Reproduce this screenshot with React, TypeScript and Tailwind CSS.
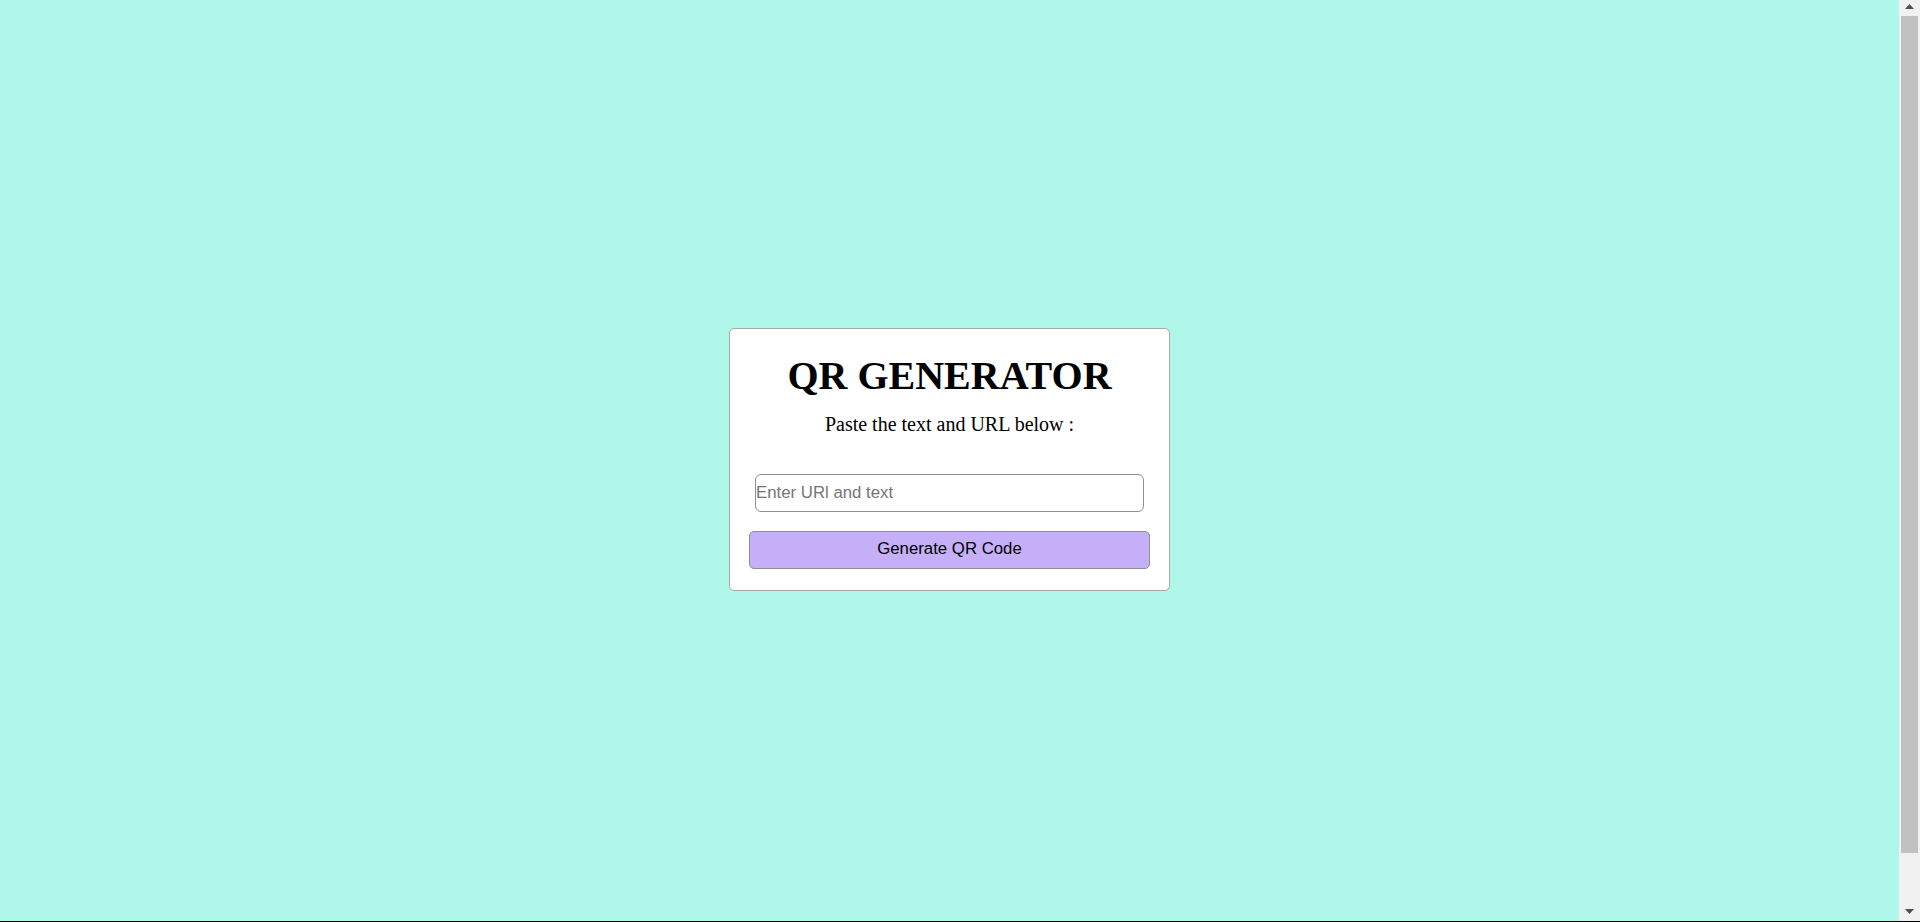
import React, { useState } from "react";

// imitation of the browser's classic scrollbar shown in the screenshot
function ScrollTrack() {
  return (
    <div className="flex w-[21px] flex-col bg-[#f1f1f1]">
      <div className="flex h-[16px] items-start justify-center pt-[4px]">
        <svg width="9" height="5" viewBox="0 0 9 5">
          <polygon points="4.5,0 9,5 0,5" fill="#505050" />
        </svg>
      </div>
      <div className="ml-[2px] h-[837px] w-[17px] bg-[#c1c1c1]" />
      <div className="flex-1" />
      <div className="flex h-[16px] items-start justify-center pt-[4px]">
        <svg width="9" height="5" viewBox="0 0 9 5">
          <polygon points="0,0 9,0 4.5,5" fill="#505050" />
        </svg>
      </div>
    </div>
  );
}

export default function App() {
  const [text, setText] = useState("");

  return (
    <div className="flex h-screen flex-col overflow-hidden bg-[#aff8e9] font-['Liberation_Serif',serif]">
      <div className="flex h-[921px]">
        <main className="flex flex-1 items-center justify-center pb-[3px]">
          <div className="flex w-[441px] flex-col items-center rounded-[5px] border border-[#a9a9a9] bg-white pt-[24px] pb-[21px]">
            <h1 className="text-[40px] leading-[46px] font-bold text-black">QR GENERATOR</h1>
            <p className="mt-[14px] text-[20px] leading-[23px] text-black">Paste the text and URL below :</p>

            <input
              autoFocus
              value={text}
              onChange={(e) => setText(e.target.value)}
              placeholder="Enter URl and text"
              className="mt-[38px] h-[38px] w-[389px] rounded-[6px] border border-[#8f8f8f] bg-white px-0 font-['Liberation_Sans',Arial,sans-serif] text-[16.8px] text-black caret-black outline-none placeholder:text-[#757575]"
            />

            <button className="mt-[19px] h-[38px] w-[401px] rounded-[5px] border border-[#8f8f8f] bg-[#c4aff8] pb-px font-['Liberation_Sans',Arial,sans-serif] text-[16.8px] text-black">
              Generate QR Code
            </button>
          </div>
        </main>
        <ScrollTrack />
      </div>
      <div className="h-px bg-black" />
    </div>
  );
}
